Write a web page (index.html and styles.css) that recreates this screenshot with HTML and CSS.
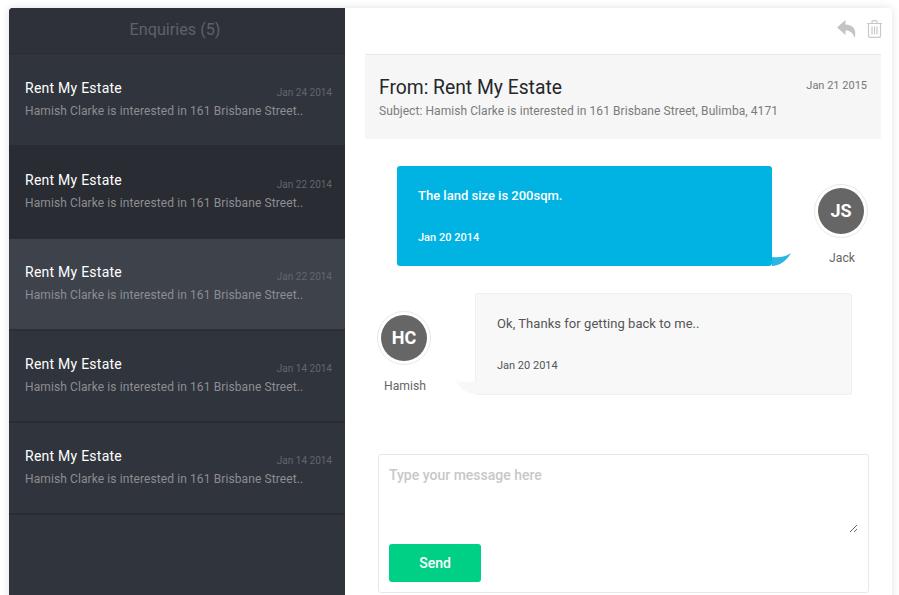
FILE: index.html
```html
<!DOCTYPE html>
<html lang="en">
<head>
    <meta charset="UTF-8">
    <title>Enquiries</title>
    <link rel="stylesheet" href="styles.css">
</head>
<body>
    <div class="card">
        <aside class="sidebar">
            <header class="side-title">Enquiries (5)</header>
            <a class="enquiry">
                <div class="enquiry-top"><span class="enquiry-name">Rent My Estate</span><span class="enquiry-date">Jan 24 2014</span></div>
                <p class="enquiry-text">Hamish Clarke is interested in 161 Brisbane Street..</p>
            </a>
            <a class="enquiry dark">
                <div class="enquiry-top"><span class="enquiry-name">Rent My Estate</span><span class="enquiry-date">Jan 22 2014</span></div>
                <p class="enquiry-text">Hamish Clarke is interested in 161 Brisbane Street..</p>
            </a>
            <a class="enquiry active">
                <div class="enquiry-top"><span class="enquiry-name">Rent My Estate</span><span class="enquiry-date">Jan 22 2014</span></div>
                <p class="enquiry-text">Hamish Clarke is interested in 161 Brisbane Street..</p>
            </a>
            <a class="enquiry">
                <div class="enquiry-top"><span class="enquiry-name">Rent My Estate</span><span class="enquiry-date">Jan 14 2014</span></div>
                <p class="enquiry-text">Hamish Clarke is interested in 161 Brisbane Street..</p>
            </a>
            <a class="enquiry">
                <div class="enquiry-top"><span class="enquiry-name">Rent My Estate</span><span class="enquiry-date">Jan 14 2014</span></div>
                <p class="enquiry-text">Hamish Clarke is interested in 161 Brisbane Street..</p>
            </a>
        </aside>

        <main class="content">
            <div class="toolbar">
                <svg class="icon-reply" width="19" height="18" viewBox="0 0 19 18"><path fill="#c4c4c4" d="M8.500 0 L0 7.500 L8.500 15 V10.600 C13 10.600 16 12.500 17.500 18 C20 10.500 16.500 4.800 8.500 4.600 Z"/></svg>
                <svg class="icon-trash" width="15" height="18" viewBox="0 0 15 18" fill="none" stroke="#c8c8c8" stroke-width="1.200"><path d="M0 3.500 H15 M5 3.500 V1.500 Q5 .6 6 .6 H9 Q10 .6 10 1.500 V3.500 M1.500 3.500 V16 Q1.500 17.400 3 17.400 H12 Q13.500 17.400 13.500 16 V3.500 M5 6.500 V14.500 M7.500 6.500 V14.500 M10 6.500 V14.500"/></svg>
            </div>

            <section class="message-head">
                <div>
                    <h1 class="from">From: Rent My Estate</h1>
                    <p class="subject">Subject: Hamish Clarke is interested in 161 Brisbane Street, Bulimba, 4171</p>
                </div>
                <span class="head-date">Jan 21 2015</span>
            </section>

            <div class="thread">
                <div class="row row-jack">
                    <div class="bubble bubble-blue">
                        <p class="bubble-text">The land size is 200sqm.</p>
                        <span class="bubble-date">Jan 20 2014</span>
                        <svg class="tail tail-right" width="20" height="13" viewBox="0 0 20 13"><path fill="#2bb5e2" d="M0 4 C7 5 14 3.500 19 0 C15 7 8 13 0 13 Z"/></svg>
                    </div>
                    <div class="person">
                        <div class="avatar"><span>JS</span></div>
                        <span class="person-name">Jack</span>
                    </div>
                </div>

                <div class="row row-hamish">
                    <div class="person">
                        <div class="avatar"><span>HC</span></div>
                        <span class="person-name">Hamish</span>
                    </div>
                    <div class="bubble bubble-grey">
                        <p class="bubble-text">Ok, Thanks for getting back to me..</p>
                        <span class="bubble-date">Jan 20 2014</span>
                        <svg class="tail tail-left" width="20" height="15" viewBox="0 0 20 15"><path fill="#f8f8f8" d="M20 1 C14 2.500 6 2 0 1 C4 8 11 14 20 14 Z"/></svg>
                    </div>
                </div>
            </div>

            <form class="reply">
                <textarea class="reply-input" placeholder="Type your message here"></textarea>
                <button class="send" type="button">Send</button>
            </form>
        </main>
    </div>
</body>
</html>
```

FILE: styles.css
```css
html, body {
    height: 100%;
}

body {
    font-family: 'Roboto', sans-serif;
    margin: 0;
    padding: 8px 7px 0 9px;
    box-sizing: border-box;
    background-color: #fff;
    overflow: hidden;
}

.card {
    display: flex;
    height: 600px;
    background-color: #fff;
    border-radius: 4px 4px 0 0;
    box-shadow: 0 0 8px rgba(0, 0, 0, 0.12);
    overflow: hidden;
}

/* left list */
.sidebar {
    width: 336px;
    flex-shrink: 0;
    background-color: #30343c;
}

.side-title {
    box-sizing: border-box;
    height: 46px;
    margin-bottom: 1px;
    padding-right: 4px;
    line-height: 43px;
    text-align: center;
    font-size: 16.200px;
    color: #5e6166;
    background-color: #2e3139;
    border-bottom: 1px solid #282b32;
}

.enquiry {
    display: block;
    box-sizing: border-box;
    height: 92px;
    padding: 25px 13px 0 16px;
    border-bottom: 2px solid #292c33;
}

.enquiry.dark {
    background-color: #292c33;
    border-bottom-color: #292c33;
}

.enquiry.active {
    background-color: #3d424b;
    border-bottom-color: #2c2f36;
}

.enquiry-top {
    display: flex;
    justify-content: space-between;
    align-items: flex-end;
}

.enquiry-name {
    font-size: 14px;
    line-height: 17px;
    letter-spacing: 0.25px;
    color: #fff;
}

.enquiry-date {
    font-size: 10px;
    line-height: 13px;
    margin-bottom: -2px;
    color: #63666c;
}

.enquiry-text {
    margin: 6px 0 0;
    font-size: 12px;
    line-height: 17px;
    letter-spacing: 0.1px;
    color: #8c8e92;
    white-space: nowrap;
}

/* right side */
.content {
    flex: 1;
    padding: 0 11px 0 20px;
    color: #555;
}

.toolbar {
    display: flex;
    justify-content: flex-end;
    align-items: center;
    gap: 11px;
    height: 46px;
    margin-right: -1px;
    padding-bottom: 4px;
    box-sizing: border-box;
}

.message-head {
    display: flex;
    justify-content: space-between;
    box-sizing: border-box;
    height: 85px;
    padding: 21px 14px 0 14px;
    background-color: #f6f6f6;
    border-top: 1px solid #e8e8e8;
}

.from {
    margin: 0;
    font-size: 19.300px;
    font-weight: 400;
    line-height: 24px;
    color: #24272c;
}

.subject {
    margin: 4px 0 0;
    font-size: 12px;
    line-height: 15px;
    letter-spacing: 0.07px;
    color: #7b7b7b;
}

.head-date {
    font-size: 11px;
    line-height: 14px;
    margin-top: 3px;
    color: #777;
}

.thread {
    display: flex;
    flex-direction: column;
}

.row {
    display: flex;
    align-items: flex-start;
}

.row-jack {
    margin-top: 27px;
    padding-left: 32px;
}

.row-hamish {
    margin-top: 27px;
    padding-left: 12px;
}

.bubble {
    position: relative;
    box-sizing: border-box;
    width: 375px;
    height: 100px;
    padding: 22px 21px 0;
    border-radius: 3px;
    font-size: 12px;
}

.bubble-blue {
    background-color: #00b3e3;
    color: #fff;
    font-weight: 500;
}

.bubble-grey {
    width: 377px;
    height: 102px;
    margin-left: 44px;
    background-color: #f8f8f8;
    border: 1px solid #f0f0f0;
    color: #555;
}

.bubble-grey .bubble-text {
    letter-spacing: 0.05px;
}

.bubble-text {
    margin: 0 0 27px;
    font-size: 13px;
    line-height: 16px;
}

.bubble-date {
    display: block;
    font-size: 11px;
    line-height: 13px;
}

.tail {
    position: absolute;
    display: block;
}

.tail-right {
    left: 100%;
    bottom: 0;
}

.tail-left {
    right: 100%;
    bottom: -1px;
}

.person {
    display: flex;
    flex-direction: column;
    align-items: center;
    width: 54px;
    flex-shrink: 0;
}

.row-jack .person {
    margin: 18px 0 0 42px;
}

.row-hamish .person {
    margin-top: 18px;
}

.avatar {
    box-sizing: border-box;
    width: 54px;
    height: 54px;
    padding: 3px;
    border: 1px solid #e8e8e8;
    border-radius: 50%;
}

.avatar span {
    display: block;
    height: 100%;
    border-radius: 50%;
    background-color: #666;
    color: #fff;
    font-size: 18px;
    font-weight: 700;
    line-height: 46px;
    text-align: center;
}

.person-name {
    margin-top: 13px;
    padding-left: 2px;
    font-size: 12.200px;
    line-height: 15px;
    color: #666;
}

.row-hamish .person-name {
    margin-top: 14px;
}

.reply {
    box-sizing: border-box;
    height: 139px;
    margin: 59px 12px 0 13px;
    padding: 10px;
    border: 1px solid #e8e8e8;
    border-radius: 3px;
}

.reply-input {
    display: block;
    box-sizing: border-box;
    width: 100%;
    height: 68px;
    padding: 0;
    border: 0;
    outline: 0;
    font-family: 'Roboto', sans-serif;
    font-size: 14px;
    font-weight: 500;
    line-height: 20px;
}

.reply-input::placeholder {
    color: #c8c8c8;
}

.send {
    display: block;
    width: 92px;
    height: 38px;
    margin-top: 11px;
    border: 0;
    border-radius: 3px;
    background-color: #00cf86;
    color: #fff;
    font-family: 'Roboto', sans-serif;
    font-size: 14px;
    font-weight: 500;
}
```
